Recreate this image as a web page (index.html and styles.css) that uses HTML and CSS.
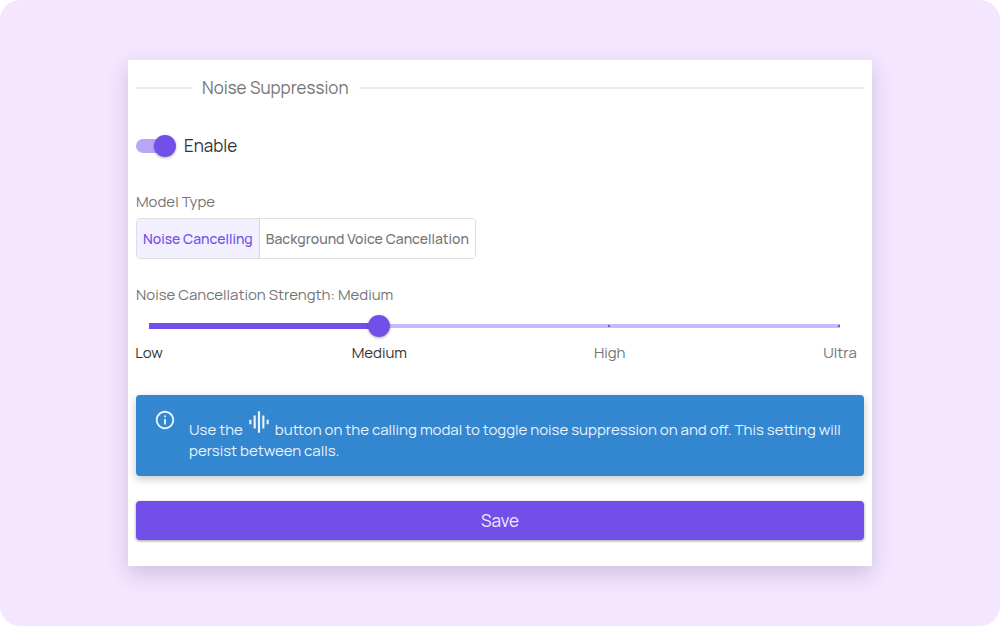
FILE: index.html
```html
<!DOCTYPE html>
<html lang="en">
<head>
    <meta charset="UTF-8">
    <meta name="viewport" content="width=device-width, initial-scale=1.0">
    <title>Noise Suppression</title>
    <link rel="stylesheet" href="styles.css">
</head>
<body>
    <main class="page">
        <form class="card">
            <h1 class="divider">Noise Suppression</h1>

            <label class="switch-row">
                <input type="checkbox" class="switch" checked>
                Enable
            </label>

            <div class="label" id="model-label">Model Type</div>
            <div class="toggle-group" role="group" aria-labelledby="model-label">
                <button type="button" class="toggle selected" aria-pressed="true">Noise Cancelling</button>
                <button type="button" class="toggle" aria-pressed="false">Background Voice Cancellation</button>
            </div>

            <label class="label strength-label" for="strength">Noise Cancellation Strength: Medium</label>
            <div class="slider">
                <input type="range" id="strength" class="range" min="0" max="3" step="1" value="1">
                <div class="marks">
                    <span class="mark active">Low</span>
                    <span class="mark active">Medium</span>
                    <span class="mark">High</span>
                    <span class="mark">Ultra</span>
                </div>
            </div>

            <div class="alert">
                <svg class="info-icon" viewBox="0 0 24 24" aria-hidden="true">
                    <path d="M11 7h2v2h-2zm0 4h2v6h-2zm1-9C6.48 2 2 6.48 2 12s4.48 10 10 10 10-4.48 10-10S17.52 2 12 2zm0 18c-4.41 0-8-3.59-8-8s3.59-8 8-8 8 3.59 8 8-3.59 8-8 8z"/>
                </svg>
                <p class="alert-text">Use the <svg class="eq-icon" viewBox="0 0 24 24" aria-hidden="true"><path d="M7 18h2V6H7v12zm4 4h2V2h-2v20zm-8-8h2v-4H3v4zm12 4h2V6h-2v12zm4-8v4h2v-4h-2z"/></svg> button on the calling modal to toggle noise suppression on and off. This setting will persist between calls.</p>
            </div>

            <button type="button" class="save">Save</button>
        </form>
    </main>
</body>
</html>
```

FILE: styles.css
```css
* {
    box-sizing: border-box;
}
body {
    margin: 0;
    background-color: #fff;
    color: #333;
    font-family: Manrope, Inter, "Liberation Sans", sans-serif;
    font-size: 15px;
    line-height: 20px;
}
button {
    font-family: inherit;
    cursor: pointer;
}
.page {
    min-height: 100vh;
    padding: 60px 128px;
    background-color: #f4e6ff;
    border-radius: 20px;
}
.card {
    display: flex;
    flex-direction: column;
    padding: 16px 8px 26px;
    background-color: #fff;
    box-shadow: 0 8px 20px rgba(70, 30, 100, 0.2);
}

/* Heading with a line on each side */
.divider {
    display: flex;
    align-items: center;
    gap: 10px;
    margin: 0;
    color: #757575;
    font-size: 17px;
    font-weight: 400;
    line-height: 24px;
}
.divider::before,
.divider::after {
    content: "";
    height: 2px;
    background-color: #ebebeb;
}
.divider::before {
    width: 56px;
}
.divider::after {
    flex: 1;
}

/* Switch */
.switch-row {
    display: flex;
    align-items: center;
    align-self: flex-start;
    gap: 8px;
    margin-top: 34px;
    font-size: 17px;
    line-height: 24px;
}
.switch {
    appearance: none;
    display: flex;
    align-items: center;
    width: 40px;
    height: 22px;
    margin: 0;
}
.switch::before {
    content: "";
    flex: 1;
    height: 14px;
    margin-right: -11px;
    background-color: #b9a6f6;
    border-radius: 7px;
}
.switch::after {
    content: "";
    width: 22px;
    height: 22px;
    background-color: #734fea;
    border-radius: 50%;
    box-shadow: 0 1px 3px rgba(0, 0, 0, 0.3);
}

.label {
    margin-top: 34px;
    color: #757575;
}

/* Model type buttons */
.toggle-group {
    display: flex;
    align-self: flex-start;
    margin-top: 6px;
    border: 1px solid #dfdfe3;
    border-radius: 4px;
    overflow: hidden;
}
.toggle {
    height: 39px;
    padding: 0 6px;
    border: none;
    background-color: #fff;
    color: #757575;
    font-size: 14px;
    font-weight: 500;
}
.toggle.selected {
    border-right: 1px solid #d8d4e6;
    background-color: #f2effe;
    color: #734fea;
}

/* Strength slider */
.strength-label {
    margin-top: 26px;
}
.slider {
    margin: 10px 13px 0 2px;
}
.range {
    appearance: none;
    display: block;
    width: 100%;
    height: 22px;
    margin: 0;
    background: none;
}
.range::-webkit-slider-runnable-track {
    height: 22px;
    background:
        linear-gradient(#734fea, #734fea) 11px center / calc((100% - 22px) / 3) 6px no-repeat,
        linear-gradient(#734fea, #734fea) calc(11px + (100% - 22px) * 2 / 3) center / 2px 2px no-repeat,
        linear-gradient(#734fea, #734fea) calc(100% - 11px) center / 2px 2px no-repeat,
        linear-gradient(#c7b9fb, #c7b9fb) center / calc(100% - 22px) 4px no-repeat;
}
.range::-webkit-slider-thumb {
    appearance: none;
    width: 22px;
    height: 22px;
    background-color: #734fea;
    border-radius: 50%;
    box-shadow: 0 1px 3px rgba(0, 0, 0, 0.3);
}
.marks {
    display: flex;
    justify-content: space-between;
    margin: 6px -19px 0;
    color: #757575;
}
.mark {
    width: 60px;
    text-align: center;
}
.mark.active {
    color: #333;
}

/* Info message */
.alert {
    display: flex;
    align-items: flex-start;
    gap: 13px;
    margin-top: 32px;
    padding: 14px 18px 15px;
    background-color: #3386d0;
    border-radius: 4px;
    box-shadow: 0 3px 8px rgba(0, 0, 0, 0.22);
    color: #eaf3fb;
}
.info-icon {
    flex: none;
    width: 22px;
    height: 22px;
    fill: currentColor;
}
.alert-text {
    margin: 0;
    line-height: 21px;
}
.eq-icon {
    width: 26px;
    height: 26px;
    fill: currentColor;
    vertical-align: baseline;
}

.save {
    height: 39px;
    margin-top: 25px;
    border: none;
    border-radius: 4px;
    background-color: #734fea;
    box-shadow: 0 1px 3px rgba(0, 0, 0, 0.4);
    color: #f1edfd;
    font-size: 17px;
}
```
